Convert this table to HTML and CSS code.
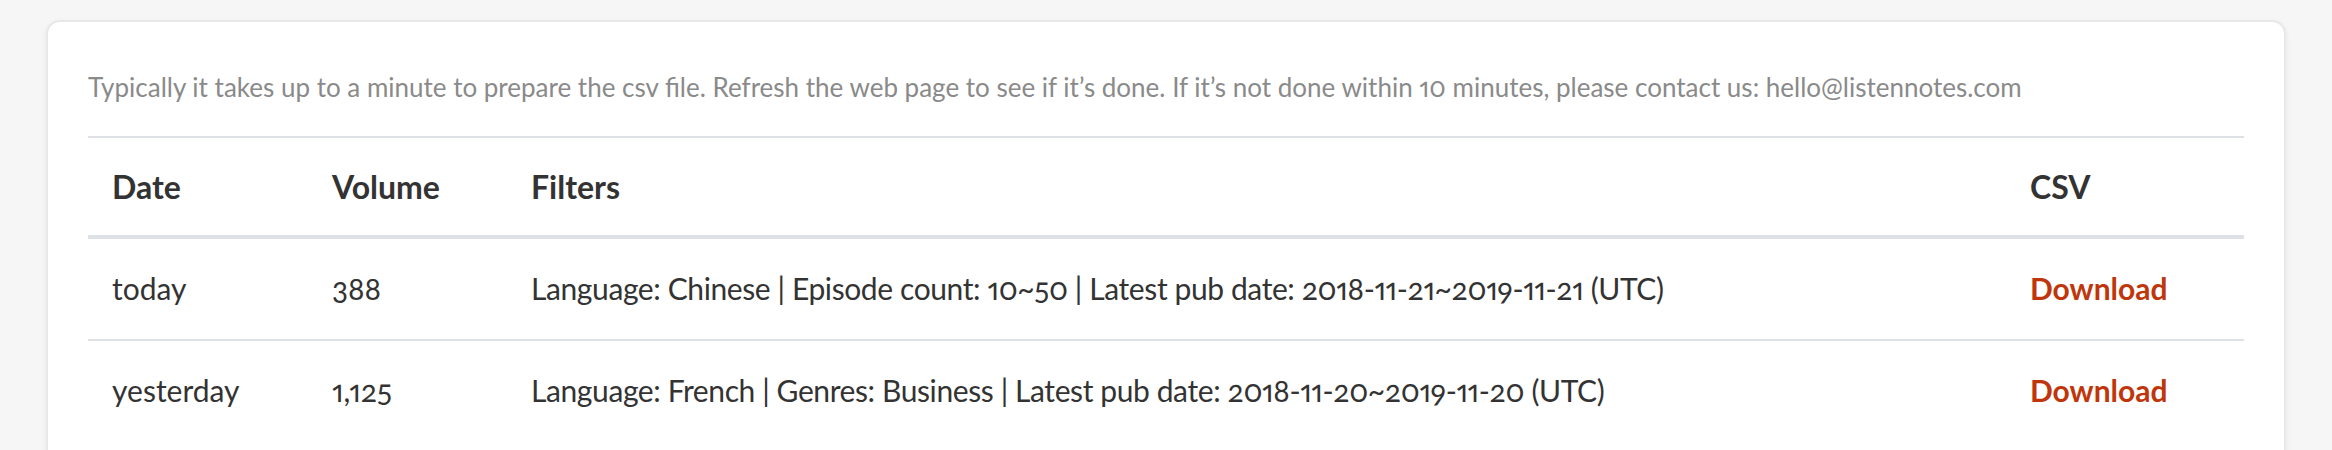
FILE: index.html
```html
<!DOCTYPE html>
<html lang="en">
<head>
<meta charset="utf-8">
<title>CSV exports</title>
<link rel="stylesheet" href="styles.css">
</head>
<body>
<div class="page">
  <div class="card">
    <p class="note">Typically it takes up to a minute to prepare the csv file. Refresh the web page to see if it’s done. If it’s not done within 10 minutes, please contact us: hello@listennotes.com</p>
    <table class="exports">
      <colgroup>
        <col class="c-date">
        <col class="c-volume">
        <col class="c-filters">
        <col class="c-csv">
      </colgroup>
      <thead>
        <tr><th>Date</th><th>Volume</th><th>Filters</th><th>CSV</th></tr>
      </thead>
      <tbody>
        <tr>
          <td>today</td>
          <td>388</td>
          <td class="filters">Language: Chinese | Episode count: 10~50 | Latest pub date: 2018-11-21~2019-11-21 (UTC)</td>
          <td><a class="dl" href="#">Download</a></td>
        </tr>
        <tr>
          <td>yesterday</td>
          <td>1,125</td>
          <td class="filters">Language: French | Genres: Business | Latest pub date: 2018-11-20~2019-11-20 (UTC)</td>
          <td><a class="dl" href="#">Download</a></td>
        </tr>
      </tbody>
    </table>
  </div>
</div>
</body>
</html>
```

FILE: styles.css
```css
html, body {
  margin: 0;
  padding: 0;
  background: #f6f6f6;
}
body {
  font-family: Lato, "Open Sans", sans-serif;
  color: #333;
  font-variant-numeric: oldstyle-nums proportional-nums;
}
.page {
  padding: 20px 46px 0 46px;
}
.card {
  background: #fff;
  border: 2px solid #e8e8e8;
  border-radius: 14px;
  box-shadow: 0 2px 6px rgba(0,0,0,0.06);
  padding: 45px 40px 40px 40px;
  min-height: 480px;
}
.note {
  margin: 0;
  font-size: 26px;
  line-height: 40px;
  color: #8a8a8a;
  padding-bottom: 29px;
}
.exports {
  width: 100%;
  border-collapse: collapse;
  font-size: 30px;
}
.c-date { width: 220px; }
.c-volume { width: 199px; }
.c-csv { width: 238px; }
.exports th, .exports td {
  text-align: left;
  padding: 26px 24px;
  line-height: 45px;
  border-top: 2px solid #dee2e6;
  vertical-align: middle;
}
.exports td {
  padding-top: 27px;
  padding-bottom: 28px;
}
.exports td.filters {
  letter-spacing: -0.4px;
}
.exports th {
  font-size: 32px;
  font-weight: 700;
  color: #333;
  border-bottom: 4px solid #dee2e6;
}
.exports thead + tbody tr:first-child td {
  border-top: 0;
}
.dl {
  color: #c0360c;
  font-weight: 700;
  text-decoration: none;
}
```
